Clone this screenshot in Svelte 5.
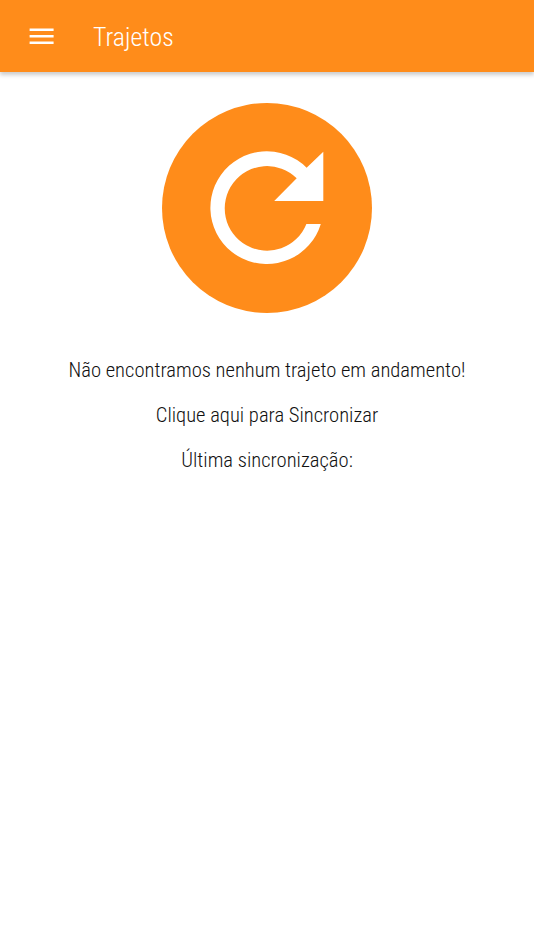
<script>
  const messages = [
    'Não encontramos nenhum trajeto em andamento!',
    'Clique aqui para Sincronizar',
    'Última sincronização:'
  ];
</script>

<div class="screen">
  <header>
    <button class="menu" aria-label="Menu">
      <svg width="25" height="18" viewBox="0 0 25 18"><path fill="#fff" d="M.6 1.5h24v2.4H.6zM.6 8h24v2.4H.6zM.6 14.5h24v2.4H.6z" /></svg>
    </button>
    <h1>Trajetos</h1>
  </header>
  <main>
    <button class="sync" aria-label="Sincronizar">
      <svg width="114" height="114" viewBox="0 0 114 114"><path fill="#fff" d="M96.6 16.7A56.4 56.4 0 1 0 110.8 72.9H96.4A42.3 42.3 0 1 1 86.7 27.2L64.2 49.9H113.3V.7Z" /></svg>
    </button>
    {#each messages as message}
      <p>{message}</p>
    {/each}
  </main>
</div>

<style>
  :global(body) { margin: 0; background: #fff; }
  .screen { height: 950px; overflow: hidden; background: #fff; font-family: "Roboto Condensed", Roboto, sans-serif; font-weight: 300; font-stretch: 75%; }
  header { height: 72px; display: flex; align-items: center; background: #ff8c1a; box-shadow: 0 3px 4px rgba(0,0,0,.2); }
  button { border: 0; padding: 0; display: flex; }
  .menu { margin-left: 29px; background: none; }
  h1 { margin: 0 0 0 39px; padding-top: 1px; font-size: 25.8px; font-weight: 300; color: #fff; line-height: 32px; }
  main { display: flex; flex-direction: column; align-items: center; padding-top: 31px; }
  .sync { width: 210px; height: 210px; margin-bottom: 35px; border-radius: 50%; background: #ff8c1a; align-items: center; justify-content: center; }
  p { margin: 0; height: 45px; line-height: 45px; font-size: 20.6px; color: #111; white-space: nowrap; }
</style>
